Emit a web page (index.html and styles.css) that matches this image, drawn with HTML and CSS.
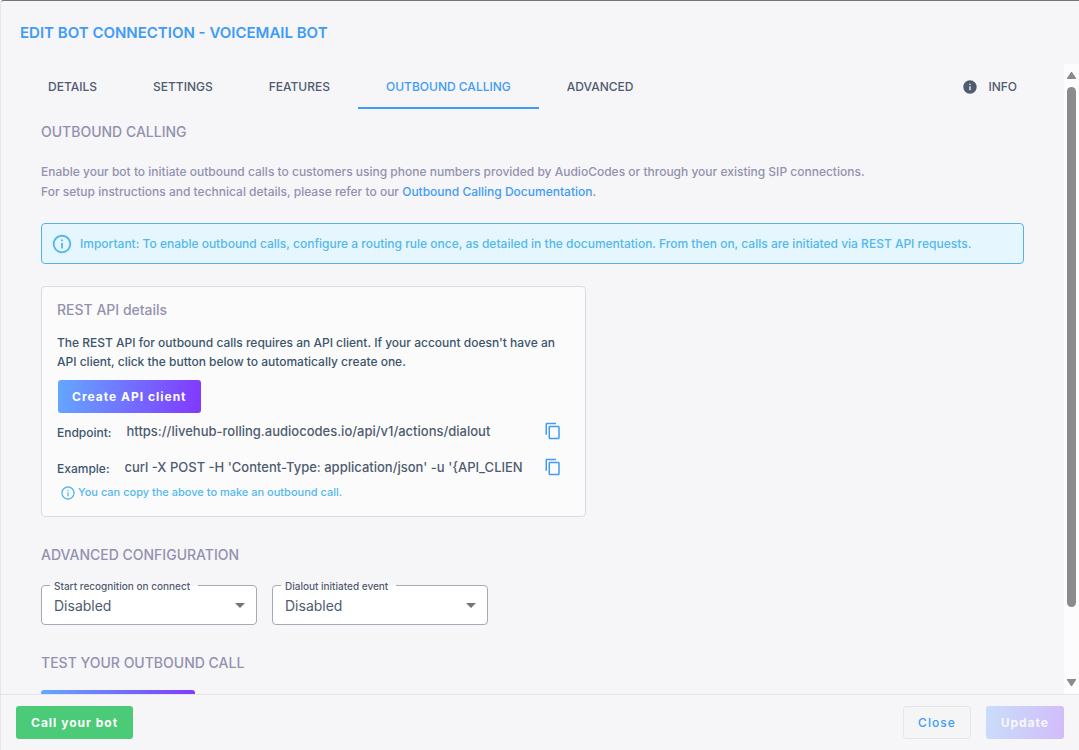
FILE: index.html
```html
<!DOCTYPE html>
<html lang="en">
<head>
	<meta charset="UTF-8">
	<meta name="viewport" content="width=device-width, initial-scale=1">
	<title>Edit bot connection</title>
	<link rel="stylesheet" href="styles.css">
</head>

<body>
	<div class="dialog">
		<h1 class="dialog-title">EDIT BOT CONNECTION - VOICEMAIL BOT</h1>

		<div class="dialog-body">
			<main class="content">
				<div class="tabs" role="tablist">
					<button class="tab" type="button" role="tab">DETAILS</button>
					<button class="tab" type="button" role="tab">SETTINGS</button>
					<button class="tab" type="button" role="tab">FEATURES</button>
					<button class="tab active" type="button" role="tab" aria-selected="true">OUTBOUND CALLING</button>
					<button class="tab" type="button" role="tab">ADVANCED</button>
					<button class="tab tab-info" type="button" role="tab">
						<svg width="16" height="16" viewBox="0 0 24 24" fill="currentColor"><path d="M12 2C6.480 2 2 6.480 2 12s4.480 10 10 10 10-4.480 10-10S17.520 2 12 2zm1 15h-2v-6h2v6zm0-8h-2V7h2v2z"/></svg>
						INFO
					</button>
				</div>

				<div class="panel" role="tabpanel">
					<h2>OUTBOUND CALLING</h2>
					<p class="intro">
						Enable your bot to initiate outbound calls to customers using phone numbers provided by AudioCodes or through your existing SIP connections.<br>
						For setup instructions and technical details, please refer to our <a href="#">Outbound Calling Documentation</a>.
					</p>

					<div class="alert">
						<svg width="22" height="22" viewBox="0 0 24 24" fill="currentColor"><path d="M11 7h2v2h-2zm0 4h2v6h-2zm1-9C6.480 2 2 6.480 2 12s4.480 10 10 10 10-4.480 10-10S17.520 2 12 2zm0 18c-4.410 0-8-3.590-8-8s3.590-8 8-8 8 3.590 8 8-3.590 8-8 8z"/></svg>
						<span>Important: To enable outbound calls, configure a routing rule once, as detailed in the documentation. From then on, calls are initiated via REST API requests.</span>
					</div>

					<section class="card">
						<h3>REST API details</h3>
						<p>The REST API for outbound calls requires an API client. If your account doesn't have an API client, click the button below to automatically create one.</p>
						<button class="btn btn-gradient" type="button">Create API client</button>
						<div class="copy-row">
							<label for="endpoint">Endpoint:</label>
							<input id="endpoint" type="text" readonly value="https://livehub-rolling.audiocodes.io/api/v1/actions/dialout">
							<button class="btn-copy" type="button" aria-label="Copy endpoint">
								<svg width="18" height="18" viewBox="0 0 24 24" fill="currentColor"><path d="M16 1H4c-1.100 0-2 .9-2 2v14h2V3h12V1zm3 4H8c-1.100 0-2 .9-2 2v14c0 1.100.9 2 2 2h11c1.100 0 2-.9 2-2V7c0-1.100-.9-2-2-2zm0 16H8V7h11v14z"/></svg>
							</button>
						</div>
						<div class="copy-row">
							<label for="example">Example:</label>
							<input id="example" type="text" readonly value="curl -X POST -H 'Content-Type: application/json' -u '{API_CLIEN">
							<button class="btn-copy" type="button" aria-label="Copy example">
								<svg width="18" height="18" viewBox="0 0 24 24" fill="currentColor"><path d="M16 1H4c-1.100 0-2 .9-2 2v14h2V3h12V1zm3 4H8c-1.100 0-2 .9-2 2v14c0 1.100.9 2 2 2h11c1.100 0 2-.9 2-2V7c0-1.100-.9-2-2-2zm0 16H8V7h11v14z"/></svg>
							</button>
						</div>
						<div class="hint">
							<svg width="16" height="16" viewBox="0 0 24 24" fill="currentColor"><path d="M11 7h2v2h-2zm0 4h2v6h-2zm1-9C6.480 2 2 6.480 2 12s4.480 10 10 10 10-4.480 10-10S17.520 2 12 2zm0 18c-4.410 0-8-3.590-8-8s3.590-8 8-8 8 3.590 8 8-3.590 8-8 8z"/></svg>
							<span>You can copy the above to make an outbound call.</span>
						</div>
					</section>

					<h2>ADVANCED CONFIGURATION</h2>
					<div class="fields">
						<div class="field">
							<label for="recognition">Start recognition on connect</label>
							<select id="recognition">
								<option>Disabled</option>
								<option>Enabled</option>
							</select>
							<svg class="arrow" width="24" height="24" viewBox="0 0 24 24" fill="currentColor"><path d="M7 10l5 5 5-5z"/></svg>
						</div>
						<div class="field">
							<label for="dialout">Dialout initiated event</label>
							<select id="dialout">
								<option>Disabled</option>
								<option>Enabled</option>
							</select>
							<svg class="arrow" width="24" height="24" viewBox="0 0 24 24" fill="currentColor"><path d="M7 10l5 5 5-5z"/></svg>
						</div>
					</div>

					<h2>TEST YOUR OUTBOUND CALL</h2>
					<button class="btn btn-gradient btn-test" type="button" aria-label="Test outbound call"></button>
				</div>
			</main>

			<div class="scrollbar" aria-hidden="true">
				<svg width="9" height="8" viewBox="0 0 9 8" fill="currentColor"><path d="M4 0h1l4 6v1H0V6z"/></svg>
				<div class="track"><div class="thumb"></div></div>
				<svg width="9" height="8" viewBox="0 0 9 8" fill="currentColor"><path d="M0 1h9v1L5 8H4L0 2z"/></svg>
			</div>
		</div>

		<footer class="dialog-footer">
			<button class="btn btn-call" type="button">Call your bot</button>
			<button class="btn btn-close" type="button">Close</button>
			<button class="btn btn-gradient" type="button" disabled>Update</button>
		</footer>
	</div>
</body>
</html>
```
FILE: styles.css
```css
* { box-sizing: border-box; }
body { margin: 0; background: #f6f6f9; }
body, button, input, select { font-family: Inter, "Liberation Sans", sans-serif; }
h1, h2, h3, p { margin: 0; }
button { cursor: pointer; }
svg { display: block; flex: none; }
a { color: #409bf7; text-decoration: none; }

.dialog { display: flex; flex-direction: column; height: 100vh; border-top: 1px solid #757278; border-left: 1px solid #e6e6ea; border-radius: 4px 0 0 0; }
.dialog-title { padding: 20px 19px; font-size: 15px; line-height: 23px; font-weight: 600; color: #409bf7; }
.dialog-body { display: flex; flex: 1; min-height: 0; }
.content { flex: 1; min-width: 0; padding: 0 19px; overflow-y: auto; scrollbar-width: none; }

/* tabs */
.tabs { display: flex; height: 45px; }
.tab { padding: 2px 28px 0; border: 0; border-bottom: 2px solid transparent; background: none; font-size: 12px; font-weight: 500; color: #4f5b6e; }
.tab.active { color: #409bf7; border-bottom-color: #409bf7; }
.tab-info { display: flex; align-items: center; gap: 10px; margin-left: auto; }

.panel { padding: 13px 21px 40px; }
h2 { font-size: 14px; line-height: 20px; font-weight: 500; color: #9391ae; }
.intro { margin: 20px 0 21px; font-size: 12px; line-height: 20px; font-weight: 500; color: #9391ae; }

.alert { display: flex; align-items: center; gap: 7px; min-height: 41px; padding: 4px 9px; border: 1px solid #53b3e6; border-radius: 4px; background: #e5f6fe; font-size: 12px; line-height: 20px; font-weight: 500; color: #53b8ec; }

/* rest api card */
.card { max-width: 545px; margin: 22px 0 28px; padding: 13px 15px 16px; border: 1px solid #dcdce0; border-radius: 4px; background: #fbfbfc; color: #3b566c; }
.card h3 { font-size: 14px; line-height: 20px; font-weight: 500; color: #9391ae; }
.card p { margin: 13px 0 9px; font-size: 12px; line-height: 19px; font-weight: 500; }
.card .btn { margin-left: 1px; }
.copy-row { display: flex; align-items: center; gap: 15px; height: 36px; }
.copy-row label { padding-top: 3px; font-size: 12px; font-weight: 500; }
.copy-row input { flex: 1; min-width: 0; padding: 0; border: 0; outline: 0; background: none; font-size: 13px; font-weight: 500; color: #4f5b6e; }
.btn-copy { margin: 0 8px 0 -10px; padding: 0; border: 0; background: none; color: #409bf7; }
.hint { display: flex; align-items: center; gap: 2px; height: 15px; padding: 0 3px; font-size: 11px; line-height: 15px; font-weight: 500; color: #53b8ec; }

/* selects */
.fields { display: flex; gap: 15px; margin: 20px 0 28px; }
.field { position: relative; width: 216px; }
.field label { position: absolute; top: -6px; left: 9px; padding: 0 8px 0 4px; background: linear-gradient(#f6f6f9 50%, #fff 50%); font-size: 10px; line-height: 14px; font-weight: 500; color: #4f5b6e; }
.field select { width: 100%; height: 40px; padding: 0 12px; border: 1px solid #a4abb8; border-radius: 4px; appearance: none; background: #fff; font-size: 14px; color: #4f5b6e; }
.arrow { position: absolute; top: 8px; right: 5px; color: #757575; pointer-events: none; }

/* buttons */
.btn { height: 33px; padding: 0 14px; border: 0; border-radius: 3px; font-size: 12px; font-weight: 700; letter-spacing: 1px; color: #fff; }
.btn-gradient { background: linear-gradient(100deg, #63a8ff, #8237ff); }
.btn-gradient:disabled { opacity: .3; }
.btn-test { width: 154px; margin-top: 17px; }
.btn-call { margin-right: auto; background: #4bcb78; }
.btn-close { border: 1px solid #e6e6ea; background: #f5f5f5; font-weight: 500; color: #409bf7; }

.scrollbar { display: flex; flex-direction: column; align-items: center; width: 15px; padding: 8px 0; background: #fcfcfc; color: #8b8b8b; }
.track { flex: 1; margin: 7px 0; }
.thumb { width: 9px; height: 89%; border-radius: 5px; background: #8b8b8b; }

.dialog-footer { display: flex; align-items: center; gap: 15px; height: 56px; padding: 0 15px; border-top: 1px solid #e6e6ea; }
.dialog-footer .btn-call, .dialog-footer .btn-gradient { padding: 0 15px; }
```
